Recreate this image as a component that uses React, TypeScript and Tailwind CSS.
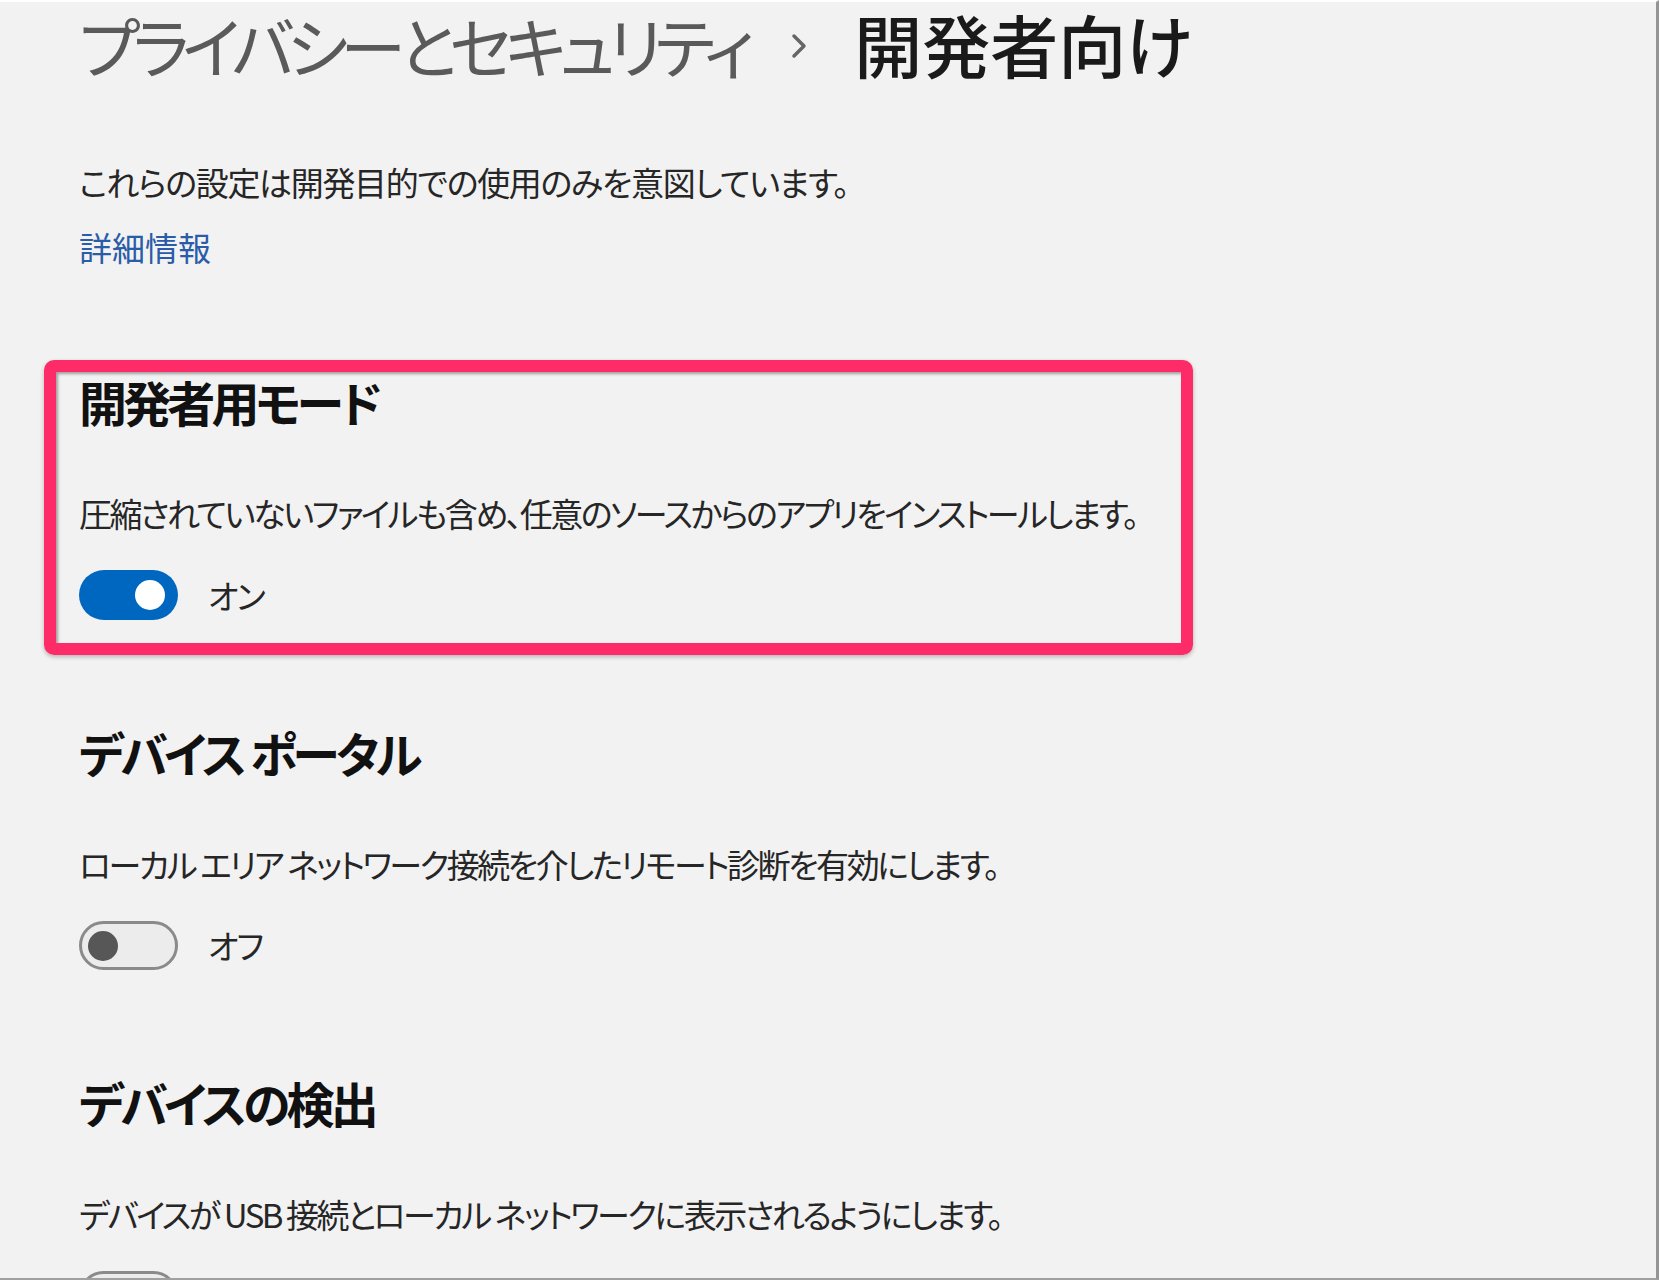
const jp = "font-['Noto_Sans_CJK_JP','Noto_Sans',sans-serif] [font-feature-settings:'palt']";

type SectionProps = {
  title: string;
  desc: string;
  on: boolean;
  highlight?: boolean;
};

const Toggle = ({ on }: { on: boolean }) =>
  on ? (
    <div className="flex items-center justify-end w-[99px] h-[50px] rounded-full bg-[#0067c0] pr-[13px]">
      <div className="w-[30px] h-[30px] rounded-full bg-white" />
    </div>
  ) : (
    <div className="flex items-center w-[99px] h-[49px] rounded-full border-[3px] border-[#8a8a8a] bg-[#ececec] pl-[6px]">
      <div className="w-[30px] h-[30px] rounded-full bg-[#575757]" />
    </div>
  );

const Section = ({ title, desc, on, highlight }: SectionProps) => (
  <section className="relative flex flex-col">
    {highlight && (
      <div className="absolute -left-[35px] -top-[17px] w-[1149px] h-[295px] rounded-[10px] border-[12px] border-[#fd2c69] shadow-[inset_2px_2px_3px_rgba(0,0,0,0.35),0_2px_4px_rgba(0,0,0,0.25)]" />
    )}
    <h2 className="text-[48px] leading-none font-semibold text-[#111] tracking-[-0.08em]">{title}</h2>
    <p className="mt-[72px] text-[33px] leading-none text-[#262626] tracking-[-0.075em]">{desc}</p>
    <div className="mt-[40px] flex items-center gap-[30px]">
      <Toggle on={on} />
      <span className="text-[33px] leading-none text-[#262626] tracking-[-0.06em]">{on ? "オン" : "オフ"}</span>
    </div>
  </section>
);

export default function App() {
  return (
    <div className={`${jp} w-[1659px] h-[1280px] overflow-hidden bg-[#f2f2f2] border-t-2 border-t-white border-r-[3px] border-r-[#959595] border-b-2 border-b-[#a0a0a0]`}>
      <div className="pl-[79px] pt-[2px]">
        <div className="flex items-center">
          <h1 className="text-[66px] leading-[80px] text-[#5a5a5a] tracking-[-0.11em] whitespace-nowrap">プライバシーとセキュリティ</h1>
          <svg className="ml-[43px] mr-[46px] mt-[4px] shrink-0" width="18" height="26" viewBox="0 0 18 26" fill="none">
            <path d="M4 3 L14 13 L4 23" stroke="#666" strokeWidth="3.5" strokeLinecap="round" strokeLinejoin="round" />
          </svg>
          <span className="text-[68px] leading-[80px] font-medium text-[#1a1a1a] whitespace-nowrap">開発者向け</span>
        </div>
        <p className="mt-[82px] text-[33px] leading-none text-[#262626] tracking-[-0.04em]">これらの設定は開発目的での使用のみを意図しています。</p>
        <a className="block mt-[32px] text-[33px] leading-none text-[#2a5ca8]">詳細情報</a>
        <div className="mt-[113px] flex flex-col gap-[108px]">
          <Section
            highlight
            title="開発者用モード"
            desc="圧縮されていないファイルも含め、任意のソースからのアプリをインストールします。"
            on
          />
          <Section
            title="デバイス ポータル"
            desc="ローカル エリア ネットワーク接続を介したリモート診断を有効にします。"
            on={false}
          />
          <Section
            title="デバイスの検出"
            desc="デバイスが USB 接続とローカル ネットワークに表示されるようにします。"
            on={false}
          />
        </div>
      </div>
    </div>
  );
}
